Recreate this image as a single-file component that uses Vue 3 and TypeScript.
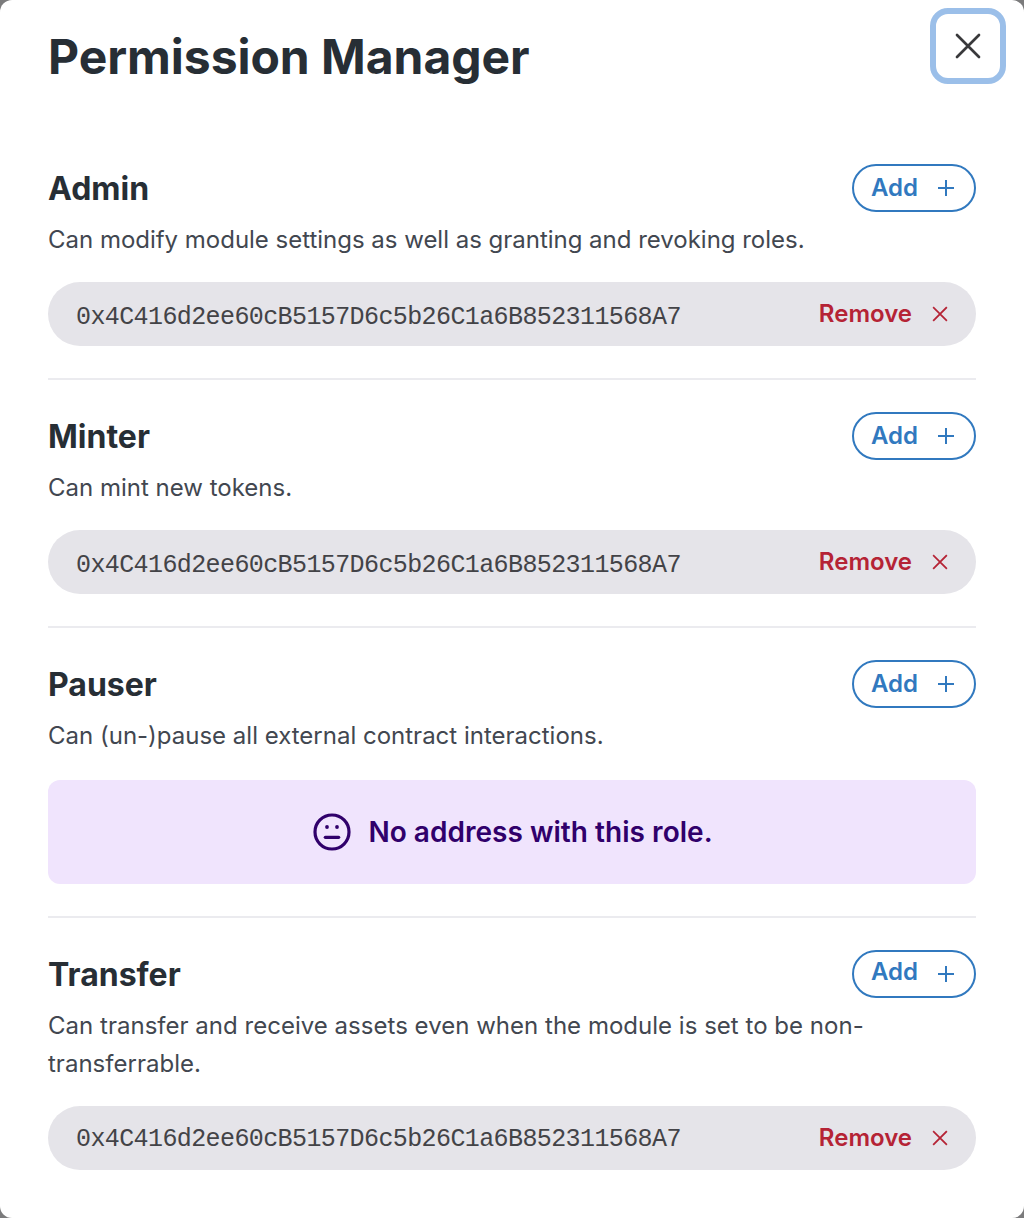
<script setup lang="ts">
interface Role {
  name: string
  description: string
  addresses: string[]
  kind: string
}

const address = '0x4C416d2ee60cB5157D6c5b26C1a6B852311568A7'
const roles: Role[] = [
  { name: 'Admin', kind: 'admin', description: 'Can modify module settings as well as granting and revoking roles.', addresses: [address] },
  { name: 'Minter', kind: 'minter', description: 'Can mint new tokens.', addresses: [address] },
  { name: 'Pauser', kind: 'pauser', description: 'Can (un-)pause all external contract interactions.', addresses: [] },
  { name: 'Transfer', kind: 'transfer', description: 'Can transfer and receive assets even when the module is set to be non-transferrable.', addresses: [address] },
]
</script>

<template>
  <div class="backdrop">
    <main class="dialog">
      <header class="top">
        <h1>Permission Manager</h1>
        <button class="close" aria-label="Close">
          <svg width="28" height="28" viewBox="0 0 28 28"><path d="M3 3 25 25M25 3 3 25" /></svg>
        </button>
      </header>
      <section v-for="role in roles" :key="role.name" class="role" :class="role.kind">
        <div class="heading">
          <h2>{{ role.name }}</h2>
          <button class="add">
            <span>Add</span>
            <svg width="16" height="16" viewBox="0 0 16 16"><path d="M8 0V16M0 8H16" /></svg>
          </button>
        </div>
        <p class="description">{{ role.description }}</p>
        <div v-for="item in role.addresses" :key="item" class="address">
          <code>{{ item }}</code>
          <button class="remove">
            <span>Remove</span>
            <svg width="16" height="16" viewBox="0 0 16 16"><path d="M1.8 1.8 14.2 14.2M14.2 1.8 1.8 14.2" /></svg>
          </button>
        </div>
        <div v-if="!role.addresses.length" class="empty">
          <svg width="38" height="38" viewBox="0 0 38 38">
            <circle cx="19" cy="19" r="17" />
            <path d="M12.3 24.3H25.7" />
            <circle class="eye" cx="14" cy="14" r="1.9" />
            <circle class="eye" cx="24" cy="14" r="1.9" />
          </svg>
          <span>No address with this role.</span>
        </div>
      </section>
    </main>
  </div>
</template>

<style>
body { background: #7b7b7c; }
</style>

<style scoped>
* { box-sizing: border-box; }
.backdrop { height: 1218px; overflow: hidden; font-family: Inter, "Liberation Sans", sans-serif; color: #272e35; }
.dialog { height: 1218px; background: #fff; border-radius: 12px; padding: 0 48px; }
.top { display: flex; justify-content: space-between; height: 132px; margin-right: -30px; padding-top: 8px; }
h1 { margin: 19px 0 0; font-size: 48px; line-height: 60px; height: 60px; font-weight: 700; letter-spacing: -0.04px; white-space: nowrap; }
button { font-family: inherit; padding: 0; border: 0; background: none; display: flex; align-items: center; }
.close { width: 76px; height: 76px; border: 6px solid #9bbfe9; border-radius: 18px; justify-content: center; background: #fff; }
svg { display: block; fill: none; stroke: currentColor; stroke-width: 2; flex: none; }
.close svg { color: #39393b; stroke-width: 2.7; stroke-linecap: round; }
.role { border-bottom: 2px solid #ebebef; padding: 32px 0; }
.role:last-child { border-bottom: 0; }
.heading { display: flex; justify-content: space-between; align-items: center; height: 48px; }
h2 { font-size: 32px; font-weight: 700; line-height: 48px; margin: 2px 0 0; }
.add { width: 124px; height: 48px; border: 2px solid #3179bf; border-radius: 24px; color: #3179bf; padding: 0 20px 0 17px; justify-content: space-between; font-size: 24px; font-weight: 600; }
.add span, .remove span { padding-bottom: 2px; }
.transfer .add span { padding-bottom: 6px; }
.description { margin: 9px 0 0; font-size: 24px; line-height: 38px; color: #424750; }
.admin .description { letter-spacing: -0.015px; }
.transfer .description { letter-spacing: 0.02px; }
.address { height: 64px; border-radius: 32px; background: #e5e4e9; margin-top: 23px; padding: 0 28px; display: flex; align-items: center; justify-content: space-between; }
code { font-family: "Liberation Mono", monospace; font-size: 25px; letter-spacing: -0.602px; color: #434347; padding-top: 6px; }
.transfer code { padding-top: 2px; }
.remove { gap: 20px; color: #b52335; font-size: 24px; font-weight: 600; }
.remove svg { stroke-linecap: square; stroke-width: 1.8; }
.empty { height: 104px; background: #f0e4fd; color: #30006b; border-radius: 12px; margin-top: 25px; padding-left: 2px; display: flex; align-items: center; justify-content: center; gap: 17px; font-size: 28px; font-weight: 600; letter-spacing: 0.03px; }
.empty svg { stroke-width: 3.2; stroke-linecap: round; }
.empty .eye { fill: currentColor; stroke: none; }
</style>
